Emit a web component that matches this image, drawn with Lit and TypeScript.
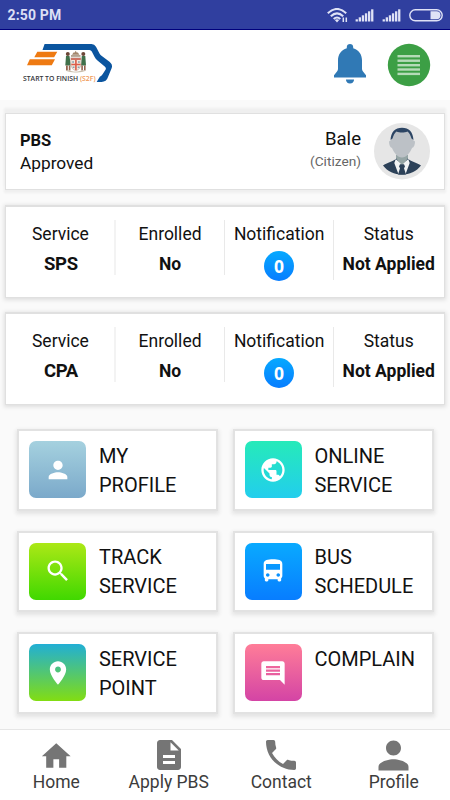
import { LitElement, html, svg, css } from "lit";
import { customElement } from "lit/decorators.js";

const ICONS: Record<string, string> = {
  person: "M12 12c2.21 0 4-1.79 4-4s-1.79-4-4-4-4 1.79-4 4 1.79 4 4 4zm0 2c-2.67 0-8 1.34-8 4v2h16v-2c0-2.66-5.33-4-8-4z",
  globe: "M12 2C6.48 2 2 6.48 2 12s4.48 10 10 10 10-4.48 10-10S17.52 2 12 2zm-1 17.93c-3.95-.49-7-3.85-7-7.93 0-.62.08-1.21.21-1.79L9 15v1c0 1.1.9 2 2 2v1.93zm6.9-2.54c-.26-.81-1-1.39-1.9-1.39h-1v-3c0-.55-.45-1-1-1H8v-2h2c.55 0 1-.45 1-1V7h2c1.1 0 2-.9 2-2v-.41c2.93 1.19 5 4.06 5 7.41 0 2.08-.8 3.97-2.1 5.39z",
  search: "M15.5 14h-.79l-.28-.27C15.41 12.59 16 11.11 16 9.5 16 5.91 13.09 3 9.5 3S3 5.91 3 9.5 5.91 16 9.5 16c1.61 0 3.09-.59 4.23-1.57l.27.28v.79l5 4.99L20.49 19l-4.99-5zm-6 0C7.01 14 5 11.99 5 9.5S7.01 5 9.5 5 14 7.01 14 9.5 11.99 14 9.5 14z",
  bus: "M4 16c0 .88.39 1.67 1 2.22V20c0 .55.45 1 1 1h1c.55 0 1-.45 1-1v-1h8v1c0 .55.45 1 1 1h1c.55 0 1-.45 1-1v-1.78c.61-.55 1-1.34 1-2.22V6c0-3.5-3.58-4-8-4s-8 .5-8 4v10zm3.5 1c-.83 0-1.5-.67-1.5-1.5S6.67 14 7.5 14s1.5.67 1.5 1.5S8.33 17 7.5 17zm9 0c-.83 0-1.5-.67-1.5-1.5s.67-1.5 1.5-1.5 1.5.67 1.5 1.5-.67 1.5-1.5 1.5zm1.5-6H6V6h12v5z",
  pin: "M12 2C8.13 2 5 5.13 5 9c0 5.25 7 13 7 13s7-7.75 7-13c0-3.87-3.13-7-7-7zm0 9.500c-1.38 0-2.5-1.12-2.5-2.5s1.12-2.5 2.5-2.5 2.5 1.12 2.5 2.5-1.12 2.5-2.5 2.500z",
  comment: "M21.99 4c0-1.100-.89-2-1.99-2H4c-1.100 0-2 .9-2 2v12c0 1.100.9 2 2 2h14l4 4-.01-18zM18 14H6v-2h12v2zm0-3H6V9h12v2zm0-3H6V6h12v2z",
  home: "M10 20v-6h4v6h5v-8h3L12 3 2 12h3v8z",
  doc: "M14 2H6c-1.100 0-1.990.9-1.990 2L4 20c0 1.100.890 2 1.990 2H18c1.100 0 2-.9 2-2V8l-6-6zm2 16H8v-2h8v2zm0-4H8v-2h8v2zm-3-5V3.500L18.500 9H13z",
  phone: "M6.620 10.790c1.440 2.830 3.760 5.140 6.590 6.590l2.200-2.200c.270-.270.670-.360 1.020-.240 1.120.370 2.330.570 3.570.570.550 0 1 .450 1 1V20c0 .550-.450 1-1 1-9.390 0-17-7.610-17-17 0-.550.450-1 1-1h3.500c.550 0 1 .450 1 1 0 1.250.200 2.450.570 3.570.110.350.030.740-.250 1.020l-2.200 2.200z",
};

const icon = (name: string, size: number) =>
  html`<svg width=${size} height=${size} viewBox="0 0 24 24" fill="currentColor"><path d=${ICONS[name]} /></svg>`;

const signal = html`<svg width="19" height="13" viewBox="0 0 19 13" fill="#dfe2f6">
  ${[0, 1, 2, 3, 4, 5].map((i) => svg`<rect x=${0.6 + i * 3.100} y=${10.3 - i * 2} width="2.3" height=${2.2 + i * 2} />`)}
</svg>`;

@customElement("status-bar")
export class StatusBar extends LitElement {
  static styles = css`
    :host { display: flex; align-items: center; height: 29px; padding: 0 7px 0 7.500px; background: #303f9f; border-bottom: 1px solid #00007c; }
    .time { flex: 1; font-size: 14px; font-weight: 700; line-height: 32px; color: #dcdff5; letter-spacing: 0.150px; }
    .icons { display: flex; align-items: center; padding-top: 1px; }
    svg { display: block; }
    .wifi { margin-right: 7px; }
    .sig { margin-right: 8px; }
  `;
  render() {
    return html`
      <span class="time">2:50 PM</span>
      <span class="icons">
        <svg class="wifi" width="21" height="15" viewBox="0 0 21 15" fill="none" stroke="#dfe2f6" stroke-width="2.100">
          <path d="M0.800 5.300Q10 -3.300 19.200 5.300M3.800 8.300Q10 2.600 16.200 8.300" />
          <path d="M6.700 11Q10 8 13.300 11" />
          <path d="M7.800 12Q10 10.500 12.200 12L10 14.500Z" fill="#dfe2f6" stroke="none" />
          <path d="M16.300 9.500v4.500M19.300 9.500v4.500" stroke-width="1.500" />
        </svg>
        <span class="sig">${signal}</span>
        <span class="sig">${signal}</span>
        <svg width="34" height="13" viewBox="0 0 34 13">
          <rect x="0.800" y="0.800" width="32.400" height="11" rx="5.500" fill="none" stroke="#dfe2f6" stroke-width="1.400" />
          <path d="M21.500 2.300h6a4 4 0 0 1 0 8h-6z" fill="#dfe2f6" />
        </svg>
      </span>
    `;
  }
}

@customElement("app-header")
export class AppHeader extends LitElement {
  static styles = css`
    :host { display: flex; height: 70px; background: #fff; padding: 0 19px 0 22px; align-items: center; }
    .logo { margin: -2px auto 0 0; }
    svg { display: block; }
    .bell { margin: -2px 20px 0 0; }
    .caption { font-family: "Open Sans", "Noto Sans", sans-serif; font-size: 7px; font-weight: 600; }
  `;
  render() {
    return html`
      <svg class="logo" width="92" height="44" viewBox="22 42 92 44">
        <path d="M44.600 44H91.500Q94.500 44 96 46.700L99.500 53.500Q100.200 54.800 101.500 55.700L109.500 61.800Q112.800 64.500 111.800 67.800L108 77Q106.500 81.900 101.500 81.900H96.700L99.800 76.800Q101.500 75.800 102.600 74.200L105.800 69.200Q106.300 68 105 66.800L97.500 60.500Q95.500 58.800 94.500 56.800L91.800 51.500Q91 50 89.500 50H42.500Z" fill="#0b559f" />
        <path d="M37.300 51.800h20l-3.200 5.400h-19.800zM29.800 59.300h25.200l-3.200 5.900h-24.800z" fill="#ee7a12" />
        <circle cx="67.800" cy="54" r="2" fill="#6d4737" /><circle cx="83.300" cy="54" r="2" fill="#6d4737" />
        <path d="M66 56h3.500l1.300 9.500h-5.500zM81.800 56h3.500l.7 9.500h-5z" fill="#40704a" />
        <path d="M66 65.500h1.800v5h-1.800zM68.800 65.500h1.600v5h-1.600zM81.300 65.500h1.600v5h-1.600zM84 65.500h1.600v5h-1.600z" fill="#94624e" />
        <path d="M72 54.700l1.500-2.200h1.200l1-1.700 1 1.700h1.200l1.500 2.200z" fill="#a3876d" />
        <path d="M71 55.200h9.500v1.500h-9.500z" fill="#9f8b75" />
        <path d="M70.800 57.800h10.200v7.500q-.8 4-5.100 5.700q-4.300-1.700-5.100-5.700z" fill="#f3e8de" stroke="#b49b8d" stroke-width="0.500" />
        <path d="M71 58h9.800v2h-9.800z" fill="#cd7465" />
        <path d="M75.100 60h1.600v10.300h-1.600zM71.300 63.800h9.300v1.500h-9.300z" fill="#db5b48" />
        <path d="M72.200 61.300h1.800v1.500h-1.800zM78 61.300h1.800v1.500h-1.800zM72.700 66.500h1.800v1.400h-1.800zM77.700 66.500h1.800v1.400h-1.800z" fill="#86a0ad" />
        <path d="M65.500 70.800q3-1 5.500.300q4.500 1.200 9 0q3-1.300 6-.300q-4 2-10 1.800q-6 .2-10.500-1.800z" fill="#cabfae" />
        <text class="caption" x="23" y="81.200" fill="#35363b" textLength="72.600" lengthAdjust="spacingAndGlyphs">START TO FINISH <tspan fill="#f09a58">(S2F)</tspan></text>
      </svg>
      <svg class="bell" width="34" height="42" viewBox="333 43 34 42" fill="#3079b5">
        <path d="M350 44c1.900 0 3.200 1.300 3.200 3.100v1.200c5.500 1.500 8.800 6.300 8.800 12v8.700c0 1 .4 1.700 1 2.500l3 3.700v2.300h-32v-2.300l3-3.700c.6-.8 1-1.500 1-2.500v-8.700c0-5.700 3.300-10.500 8.800-12v-1.200c0-1.800 1.300-3.100 3.200-3.100zM345.900 79.500h8.200c0 2.300-1.800 4.100-4.100 4.100s-4.100-1.800-4.100-4.100z" />
      </svg>
      <svg width="44" height="44" viewBox="0 0 44 44">
        <circle cx="22" cy="22" r="21.200" fill="#3c9f45" />
        ${[12, 16.5, 21, 25.3, 29.7].map((y) => svg`<rect x="10.500" y=${y} width="22.500" height="2.400" fill="#b5dbb8" />`)}
      </svg>
    `;
  }
}

@customElement("user-card")
export class UserCard extends LitElement {
  static styles = css`
    :host { display: flex; box-sizing: border-box; height: 77px; padding: 8.500px 14px 0 14px; background: #fff; border: 1px solid #e0e0e0; box-shadow: 0 -4px 2px 1px #efefef, 0 2px 2px 1px #efefef; color: #111; }
    .left { flex: 1; font-size: 17.300px; line-height: 23px; padding-top: 6px; }
    .left b { display: block; font-size: 16.500px; letter-spacing: -0.100px; }
    .right { text-align: right; padding: 5px 13px 0 0; }
    .name { font-size: 18.600px; line-height: 22px; }
    .role { font-size: 13.700px; line-height: 22px; color: #666; }
    svg { display: block; }
  `;
  render() {
    return html`
      <div class="left"><b>PBS</b>Approved</div>
      <div class="right">
        <div class="name">Bale</div>
        <div class="role">(Citizen)</div>
      </div>
      <svg width="56" height="57" viewBox="0 0 56 57">
        <ellipse cx="28" cy="28.300" rx="28" ry="28.200" fill="#e6e6e6" />
        <path d="M22 32h12v6l-6 8-6-8z" fill="#95a5a5" />
        <path d="M9 42.500c4-3 9-3.500 13.500-7l5.500 10 5.500-10c4.500 3.500 9.500 4 13.500 7-4.500 6-11.500 9.200-19 9.200S13.500 48.500 9 42.500z" fill="#2c4158" />
        <path d="M21.800 36l6.200 6 6.200-6 1.500 4-4.200 11.300q-3.500.5-7 0L20.300 40z" fill="#f2f4f5" />
        <path d="M26 41.200h4l1 2.300-1 1.800 2 6.200q-4 .4-8 0l2-6.200-1-1.800z" fill="#2c4158" />
        <path d="M17 17c0-7 4.500-10.500 11-10.500S39 10 39 17l2 1.500c0 3-1 6-3 6.500-2 4.500-5.500 9.500-10 9.500s-8-5-10-9.500c-2-.5-3-3.500-3-6.500z" fill="#bcc1c6" />
        <path d="M16.500 17C17 9 21 4.800 28 4.800S39 9 39.500 17l-2-1.500c-1-3.500-2.200-5.500-4-7-3 1.400-8 1.400-11 0-1.800 1.500-3 3.500-4 7z" fill="#2c4564" />
      </svg>
    `;
  }
}

@customElement("service-card")
export class ServiceCard extends LitElement {
  static properties = { name: {} };
  declare name: string;
  static styles = css`
    :host { display: flex; box-sizing: border-box; height: 93px; padding: 13px 0 0 0.900px; background: #fff; border: solid #e0e0e0; border-width: 2px 1px 1px; box-shadow: 0 1px 4px 1px #dedede; color: #111; }
    .col { box-sizing: border-box; flex: none; width: 109.100px; height: 55px; padding-top: 1.500px; text-align: center; border-right: 1px solid #e9e9e9; font-size: 17.500px; line-height: 24px; white-space: nowrap; }
    .col.wide { border-right: 2px solid #f3f3f3; }
    .col.tall { height: 60px; }
    .col.last { border: 0; }
    .val { font-weight: 700; line-height: 29px; padding-top: 4px; font-size: 17.500px; }
    .val.code { font-size: 18.500px; line-height: 31px; letter-spacing: -0.300px; padding: 3.500px 0 0 1px; }
    .badge { width: 30px; height: 30px; margin: 5.500px auto 0; border-radius: 50%; background: linear-gradient(#06a9ff, #087dff); color: #fff; font: 700 17.500px/30px "Open Sans", "Noto Sans", sans-serif; }
  `;
  render() {
    return html`
      <div class="col wide">Service<div class="val code">${this.name}</div></div>
      <div class="col">Enrolled<div class="val">No</div></div>
      <div class="col tall">Notification<div class="badge">0</div></div>
      <div class="col last">Status<div class="val">Not Applied</div></div>
    `;
  }
}

@customElement("menu-tile")
export class MenuTile extends LitElement {
  static properties = { icon: {}, label: {}, from: {}, to: {} };
  declare icon: string;
  declare label: string;
  declare from: string;
  declare to: string;
  static styles = css`
    :host { display: flex; box-sizing: border-box; height: 81.500px; padding: 10px; gap: 12.700px; background: #fff; border: 2px solid #e2e2e2; box-shadow: 0 2px 4px 1px #e3e3e3; color: #111; font-size: 20px; line-height: 29px; white-space: pre-line; }
    .pic { display: flex; flex: none; align-items: center; justify-content: center; width: 57.300px; height: 57.300px; border-radius: 7px; color: #fff; }
    span { padding-top: 0.500px; }
  `;
  render() {
    return html`<div class="pic" style="background: linear-gradient(${this.from}, ${this.to})">${icon(this.icon, 28)}</div><span>${this.label}</span>`;
  }
}

@customElement("bottom-nav")
export class BottomNav extends LitElement {
  static styles = css`
    :host { display: flex; box-sizing: border-box; height: 71px; background: #fff; border-top: 1px solid #e6e6e6; padding-top: 7px; color: #3c3c3c; }
    .item { flex: 1; display: flex; flex-direction: column; align-items: center; font-size: 17.500px; line-height: 19px; }
    .glyph { display: flex; align-items: center; justify-content: center; width: 36px; height: 36px; }
    .glyph.home { padding-top: 2px; height: 34px; }
    svg { display: block; flex: none; color: #757575; }
  `;
  render() {
    const items: [string, string, number][] = [["home", "Home", 34.5], ["doc", "Apply PBS", 36], ["phone", "Contact", 40], ["person", "Profile", 45]];
    return html`${items.map(([i, label, size]) => html`<div class="item"><div class="glyph ${i}">${icon(i, size)}</div><span>${label}</span></div>`)}`;
  }
}

@customElement("app-root")
export class AppRoot extends LitElement {
  static styles = css`
    :host { display: flex; flex-direction: column; width: 450px; height: 800px; overflow: hidden; background: #fafafa; font-family: Roboto, sans-serif; }
    .cards { display: flex; flex-direction: column; padding: 13px 5px 0; }
    .first { margin-top: 15px; }
    .second { margin-top: 14px; }
    .tiles { display: grid; grid-template-columns: 201px 201px; gap: 20px 14.500px; padding: 24px 0 0 17px; }
    .nav { margin-top: auto; }
  `;
  render() {
    const tiles = [
      ["person", "MY\nPROFILE", "#a5d1df", "#7ba9ca"],
      ["globe", "ONLINE\nSERVICE", "#26eab9", "#22ceed"],
      ["search", "TRACK\nSERVICE", "#ace816", "#40d800"],
      ["bus", "BUS\nSCHEDULE", "#09aaff", "#087dff"],
      ["pin", "SERVICE\nPOINT", "#21afd5", "#82dd12"],
      ["comment", "COMPLAIN", "#ff7d98", "#d444a5"],
    ];
    return html`
      <status-bar></status-bar>
      <app-header></app-header>
      <div class="cards">
        <user-card></user-card>
        <service-card class="first" name="SPS"></service-card>
        <service-card class="second" name="CPA"></service-card>
      </div>
      <div class="tiles">
        ${tiles.map(([i, l, a, b]) => html`<menu-tile .icon=${i} .label=${l} .from=${a} .to=${b}></menu-tile>`)}
      </div>
      <bottom-nav class="nav"></bottom-nav>
    `;
  }
}
